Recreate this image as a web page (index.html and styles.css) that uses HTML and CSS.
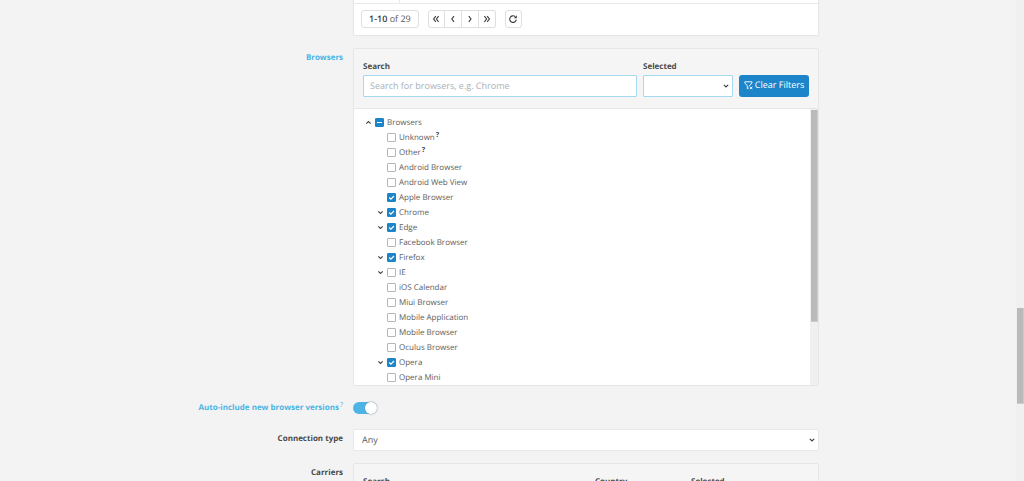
FILE: index.html
```html
<!DOCTYPE html>
<html lang="en">
<head>
<meta charset="utf-8">
<title>Campaign targeting</title>
<link rel="stylesheet" href="styles.css">
</head>
<body>
<div class="app">
  <main class="form">
    <div class="row">
      <div class="label"></div>
      <section class="card pager-card">
        <div class="table-end"><span class="table-cell"></span></div>
        <nav class="pager" aria-label="Pagination">
          <span class="pager-info"><span class="range">1-10</span> of 29</span>
          <span class="pager-group">
            <button type="button" aria-label="First page"><svg viewBox="0 0 8 8"><path d="M3.8 1.2 1.6 4l2.2 2.8M6.6 1.2 4.4 4l2.2 2.8"/></svg></button>
            <button type="button" aria-label="Previous page"><svg viewBox="0 0 8 8"><path d="M5 1.2 2.8 4 5 6.8"/></svg></button>
            <button type="button" aria-label="Next page"><svg viewBox="0 0 8 8"><path d="M2.8 1.2 5 4 2.8 6.8"/></svg></button>
            <button type="button" aria-label="Last page"><svg viewBox="0 0 8 8"><path d="M1.4 1.2 3.6 4 1.4 6.8M4.2 1.2 6.4 4 4.2 6.8"/></svg></button>
          </span>
          <button type="button" class="reload" aria-label="Reload"><svg viewBox="0 0 8 8"><path d="M6.2 1.6A3.3 3.3 0 1 0 7.3 4.6"/><path class="solid" d="M7.8.2v3H4.8z"/></svg></button>
        </nav>
      </section>
    </div>

    <div class="row">
      <div class="label changed">Browsers</div>
      <section class="card">
        <div class="filters">
          <div class="field grow">
            <label for="browser-search">Search</label>
            <input id="browser-search" class="control" type="text" placeholder="Search for browsers, e.g. Chrome">
          </div>
          <div class="field narrow">
            <label for="browser-selected">Selected</label>
            <select id="browser-selected" class="control"><option></option></select>
          </div>
          <button type="button" class="clear"><svg viewBox="0 0 9 9"><path d="M5.2 5.1 8 1.9V.8H.8v1.1l2.5 3v2.9l1.4-.9M5.8 5.6l2.6 2.6M8.4 5.6 5.8 8.2"/></svg>Clear Filters</button>
        </div>
        <div class="tree-pane">
          <ul class="tree">
            <li><button type="button" class="twist open" aria-label="Collapse Browsers"></button><input type="checkbox" class="mixed" id="b0"><label for="b0">Browsers</label></li>
            <li class="child"><span class="twist"></span><input type="checkbox" id="b1"><label for="b1">Unknown<sup>?</sup></label></li>
            <li class="child"><span class="twist"></span><input type="checkbox" id="b2"><label for="b2">Other<sup>?</sup></label></li>
            <li class="child"><span class="twist"></span><input type="checkbox" id="b3"><label for="b3">Android Browser</label></li>
            <li class="child"><span class="twist"></span><input type="checkbox" id="b4"><label for="b4">Android Web View</label></li>
            <li class="child"><span class="twist"></span><input type="checkbox" id="b5" checked><label for="b5">Apple Browser</label></li>
            <li class="child"><button type="button" class="twist closed" aria-label="Expand Chrome"></button><input type="checkbox" id="b6" checked><label for="b6">Chrome</label></li>
            <li class="child"><button type="button" class="twist closed" aria-label="Expand Edge"></button><input type="checkbox" id="b7" checked><label for="b7">Edge</label></li>
            <li class="child"><span class="twist"></span><input type="checkbox" id="b8"><label for="b8">Facebook Browser</label></li>
            <li class="child"><button type="button" class="twist closed" aria-label="Expand Firefox"></button><input type="checkbox" id="b9" checked><label for="b9">Firefox</label></li>
            <li class="child"><button type="button" class="twist closed" aria-label="Expand IE"></button><input type="checkbox" id="b10"><label for="b10">IE</label></li>
            <li class="child"><span class="twist"></span><input type="checkbox" id="b11"><label for="b11">iOS Calendar</label></li>
            <li class="child"><span class="twist"></span><input type="checkbox" id="b12"><label for="b12">Miui Browser</label></li>
            <li class="child"><span class="twist"></span><input type="checkbox" id="b13"><label for="b13">Mobile Application</label></li>
            <li class="child"><span class="twist"></span><input type="checkbox" id="b14"><label for="b14">Mobile Browser</label></li>
            <li class="child"><span class="twist"></span><input type="checkbox" id="b15"><label for="b15">Oculus Browser</label></li>
            <li class="child"><button type="button" class="twist closed" aria-label="Expand Opera"></button><input type="checkbox" id="b16" checked><label for="b16">Opera</label></li>
            <li class="child"><span class="twist"></span><input type="checkbox" id="b17"><label for="b17">Opera Mini</label></li>
          </ul>
          <div class="rail tree-rail"><div class="thumb"></div></div>
        </div>
      </section>
    </div>

    <div class="row switch-row">
      <label class="label changed" for="auto-include">Auto-include new browser versions<sup>?</sup></label>
      <div><input type="checkbox" role="switch" class="switch" id="auto-include" checked></div>
    </div>

    <div class="row type-row">
      <label class="label" for="connection">Connection type</label>
      <select id="connection" class="control plain"><option>Any</option></select>
    </div>

    <div class="row">
      <div class="label">Carriers</div>
      <section class="card">
        <div class="filters">
          <div class="field grow">
            <label for="carrier-search">Search</label>
            <input id="carrier-search" class="control" type="text">
          </div>
          <div class="field narrow">
            <label for="carrier-country">Country</label>
            <select id="carrier-country" class="control"><option></option></select>
          </div>
          <div class="field carrier-selected">
            <label for="carrier-selected">Selected</label>
            <select id="carrier-selected" class="control"><option></option></select>
          </div>
        </div>
      </section>
    </div>
  </main>
  <div class="rail page-rail"><div class="thumb"></div></div>
</div>
</body>
</html>
```

FILE: styles.css
```css
* { box-sizing: border-box; }

body {
  margin: 0;
  background: #f3f3f3;
  color: #5c5c5c;
  font: 8px/12px "Open Sans", sans-serif;
  text-rendering: geometricPrecision;
}

button, input, select {
  margin: 0;
  color: inherit;
  font: inherit;
  text-rendering: inherit;
}

.app {
  display: flex;
  height: 100vh;
  overflow: hidden;
}

.form {
  flex: 1;
  display: flex;
  flex-direction: column;
  gap: 12px;
}

.row {
  display: grid;
  grid-template-columns: 343fr 466fr 187fr;
  column-gap: 10px;
  flex: none;
}

.label {
  padding-top: 4px;
  color: #4a4a4a;
  font-weight: 700;
  text-align: right;
}

.label.changed { color: #4cb5e5; }

sup {
  margin-left: 1px;
  font-size: 7px;
  line-height: 0;
  vertical-align: 3px;
}

.card {
  min-width: 0;
  background: #fff;
  border: 1px solid #e6e6e6;
  border-radius: 2px;
}

.pager-card {
  border-top: 0;
  border-radius: 0 0 2px 2px;
  box-shadow: 0 0 1px #e2e2e2;
}

.table-end {
  display: flex;
  height: 4px;
  border-bottom: 1px solid #e9e9e9;
}

.table-cell {
  width: 46px;
  border-right: 1px solid #e9e9e9;
}

.pager {
  display: flex;
  gap: 9px;
  padding: 6px 7px 7px;
}

.pager-info, .pager button {
  height: 18px;
  background: #fff;
  border: 1px solid #dddfe1;
  border-radius: 3px;
}

.pager-info {
  padding: 0 7px;
  font-size: 9px;
  line-height: 16px;
}

.range {
  color: #3c3c3c;
  font-weight: 600;
}

.pager-group { display: flex; }

.pager button {
  display: grid;
  place-items: center;
  width: 17px;
  padding: 0;
}

.pager-group button { border-radius: 0; }
.pager-group button + button { border-left-width: 0; }
.pager-group button:first-child { border-radius: 3px 0 0 3px; }
.pager-group button:last-child { border-radius: 0 3px 3px 0; }

.pager svg {
  width: 8px;
  height: 8px;
  fill: none;
  stroke: #3c3c3c;
  stroke-width: 1.1;
}

.pager .solid {
  fill: #3c3c3c;
  stroke: none;
}

.filters {
  display: flex;
  align-items: flex-end;
  gap: 6px;
  padding: 12px 9px 11px;
  background: #f5f5f5;
  border-bottom: 1px solid #e6e6e6;
}

.field {
  display: flex;
  flex-direction: column;
  gap: 2px;
  color: #4a4a4a;
  font-weight: 700;
}

.grow { flex: 1; }
.narrow { width: 90px; }
.carrier-selected { width: 118px; }

.control {
  width: 100%;
  height: 22px;
  padding: 0 6px 2px;
  background-color: #fff;
  border: 1px solid #a3daf0;
  border-radius: 1px;
  color: #5c5c5c;
  font-size: 9px;
  font-weight: 400;
  outline: 0;
}

.control::placeholder { color: #a9b1b7; }

select.control {
  appearance: none;
  background-image: url("data:image/svg+xml,%3Csvg xmlns='http://www.w3.org/2000/svg' viewBox='0 0 6 6'%3E%3Cpath d='M.8 1.8 3 4l2.2-2.2' fill='none' stroke='%23444' stroke-width='1.2'/%3E%3C/svg%3E");
  background-position: right 3px center;
  background-repeat: no-repeat;
  background-size: 6px 6px;
}

.control.plain {
  padding: 0 8px;
  border-color: #e9e9e9;
}

.clear {
  display: flex;
  align-items: center;
  justify-content: center;
  gap: 2px;
  width: 70px;
  height: 22px;
  padding: 0 0 2px;
  background: #1c84c9;
  border: 0;
  border-radius: 3px;
  color: #fff;
  font-size: 9px;
  white-space: nowrap;
}

.clear svg {
  width: 9px;
  height: 9px;
  fill: none;
  stroke: #fff;
  stroke-width: 0.9;
}

.tree-pane {
  display: flex;
  height: 276px;
  overflow: hidden;
}

.tree {
  flex: 1;
  margin: 0;
  padding: 6px 11px;
  list-style: none;
}

.tree li {
  display: flex;
  align-items: center;
  gap: 3px;
  height: 15px;
}

.tree .child { padding-left: 12px; }

.twist {
  width: 7px;
  height: 7px;
  padding: 0;
  background: none;
  border: 0;
}

.closed, .open {
  background: url("data:image/svg+xml,%3Csvg xmlns='http://www.w3.org/2000/svg' viewBox='0 0 7 7'%3E%3Cpath d='M1.3 2.3l2.2 2.2 2.2-2.2' fill='none' stroke='%23444' stroke-width='1.1'/%3E%3C/svg%3E");
}

.open { transform: rotate(180deg); }

.tree input {
  appearance: none;
  width: 9px;
  height: 9px;
  background: #fff center / 9px 9px no-repeat;
  border: 1px solid #b4b7b9;
  border-radius: 1px;
}

.tree input:checked, .tree .mixed {
  background-color: #1c84c9;
  background-origin: border-box;
  border-color: #1c84c9;
}

.tree input:checked {
  background-image: url("data:image/svg+xml,%3Csvg xmlns='http://www.w3.org/2000/svg' viewBox='0 0 9 9'%3E%3Cpath d='M2.2 4.5l1.7 1.7L7 3' fill='none' stroke='%23fff' stroke-width='1.2'/%3E%3C/svg%3E");
}

.tree .mixed {
  background-image: url("data:image/svg+xml,%3Csvg xmlns='http://www.w3.org/2000/svg' viewBox='0 0 9 9'%3E%3Cpath d='M2 4.5h5' stroke='%23fff'/%3E%3C/svg%3E");
}

.tree sup {
  color: #3c3c3c;
  font-weight: 700;
}

.rail {
  display: flex;
  flex-direction: column;
  flex: none;
  width: 8px;
  background: #f0f0f0;
}

.thumb {
  margin-left: 1px;
  background: #bababa;
  border: solid #cbcbcb;
  border-width: 0 1px 1px 0;
}

.tree-rail { padding-top: 1px; }
.tree-rail .thumb { height: 77%; }
.page-rail::before { content: ""; height: 64%; }
.page-rail .thumb { height: 20%; }

.switch-row { padding-top: 4px; }
.switch-row .label { padding: 0; }
.switch-row sup { font-weight: 400; }

.switch {
  appearance: none;
  display: flex;
  width: 24px;
  height: 12px;
  background: #4cb5e5;
  border-radius: 6px;
  justify-content: flex-end;
}

.switch::before {
  content: "";
  width: 12px;
  height: 12px;
  background: #fff;
  border-radius: 50%;
  box-shadow: 0 0 2px #8c8c8c;
}

.type-row { padding-top: 3px; }
```
